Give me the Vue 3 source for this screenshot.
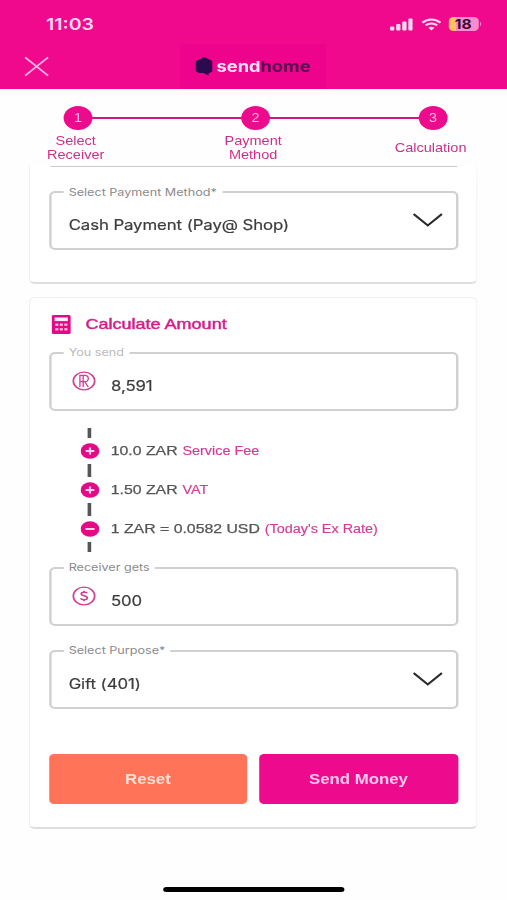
<script setup>
const steps = [
  { n: 1, lines: ['Select', 'Receiver'] },
  { n: 2, lines: ['Payment', 'Method'] },
  { n: 3, lines: ['Calculation'] },
]
const rates = [
  { plus: true, value: '10.0 ZAR', note: 'Service Fee' },
  { plus: true, value: '1.50 ZAR', note: 'VAT' },
  { plus: false, value: '1 ZAR = 0.0582 USD', note: "(Today's Ex Rate)" },
]
</script>

<template>
  <div class="screen">
    <header class="header">
      <div class="status">
        <span class="time">11:03</span>
        <span class="indicators">
          <svg class="signal" viewBox="0 0 19 13">
            <rect x="0" y="8.6" width="3.6" height="4" rx="1" />
            <rect x="5.1" y="6" width="3.6" height="6.6" rx="1" />
            <rect x="10.2" y="3.4" width="3.6" height="9.2" rx="1" />
            <rect x="15.3" y="0.6" width="3.6" height="12" rx="1" />
          </svg>
          <svg class="wifi" viewBox="0 0 17 13">
            <path d="M1 4.7C5.2.4 11.8.4 16 4.7" />
            <path d="M3.7 7.4c2.7-2.6 6.9-2.6 9.6 0" />
            <path class="dot" d="M8.5 12.4 5.9 9.7c1.4-1.3 3.8-1.3 5.2 0z" />
          </svg>
          <span class="battery"><span class="level">18</span></span>
          <span class="tip"></span>
        </span>
      </div>
      <div class="nav">
        <svg class="close" viewBox="0 0 22 22"><path d="M1 1.4 21 20.6M21 1.4 1 20.6" /></svg>
        <div class="brand">
          <svg class="mark" viewBox="0 0 14 18">
            <path d="M7 0 14 4v9.8L10.5 16v2L6.5 15.6H3L0 13.8V4z" />
          </svg>
          <span class="word">send<b>home</b></span>
        </div>
      </div>
    </header>

    <nav class="stepper">
      <div v-for="s in steps" :key="s.n" class="step">
        <span class="bubble">{{ s.n }}</span>
        <span class="caption"><span v-for="l in s.lines" :key="l">{{ l }}</span></span>
      </div>
    </nav>

    <section class="card first">
      <div class="edge"></div>
      <div class="field">
        <label>Select Payment Method*</label>
        <span class="value">Cash Payment (Pay@ Shop)</span>
        <svg class="chevron" viewBox="0 0 25 14"><path d="M.7 1 12.5 12.4 24.3 1" /></svg>
      </div>
    </section>

    <section class="card second">
      <h2 class="title">
        <svg class="calc" viewBox="0 0 16 19">
          <rect width="16" height="19" rx="1.5" fill="#e30a88" />
          <rect x="2.5" y="2.5" width="11" height="3.6" fill="#ffeef8" />
          <g fill="#ffc4e6">
            <rect x="3" y="8.6" width="2.6" height="2.2" />
            <rect x="6.8" y="8.6" width="2.6" height="2.2" />
            <rect x="10.6" y="8.6" width="2.6" height="2.2" />
            <rect x="3" y="13.2" width="2.6" height="2.2" />
            <rect x="6.8" y="13.2" width="2.6" height="2.2" />
            <rect x="10.6" y="13.2" width="2.6" height="2.2" />
          </g>
        </svg>
        <span>Calculate Amount</span>
      </h2>

      <div class="field">
        <label class="pale">You send</label>
        <svg class="coin" viewBox="0 0 20 20">
          <circle cx="10" cy="10" r="8.9" />
          <path class="rand" d="M6.6 16V4.400h4.200c3.700 0 3.700 6.200 0 6.200H6.600M10.600 10.600l2.900 5.400M9.300 4.400V16" />
        </svg>
        <span class="value">8,591</span>
      </div>

      <div class="rates">
        <div v-for="r in rates" :key="r.note" class="rate">
          <span class="rail">
            <i class="dash"></i>
            <svg class="sign" viewBox="0 0 16 16">
              <circle cx="8" cy="8" r="7.8" />
              <path :d="r.plus ? 'M4.4 8h7.2M8 4.6v6.8' : 'M4.2 8h7.6'" />
            </svg>
          </span>
          <span class="sum">{{ r.value }}</span>
          <span class="note">{{ r.note }}</span>
        </div>
        <i class="dash last"></i>
      </div>

      <div class="field">
        <label>Receiver gets</label>
        <svg class="coin" viewBox="0 0 20 20">
          <circle cx="10" cy="10" r="8.9" />
          <path d="M12.7 7.3c-.6-1.3-4.9-1.6-5 .6 0 2.2 5.1 1.5 5.1 4 0 2.4-5 2.1-5.5.3M10 4.7v1.6M10 13.7v1.6" />
        </svg>
        <span class="value">500</span>
      </div>

      <div class="field purpose">
        <label>Select Purpose*</label>
        <span class="value">Gift (401)</span>
        <svg class="chevron" viewBox="0 0 25 14"><path d="M.7 1 12.5 12.4 24.3 1" /></svg>
      </div>

      <div class="actions">
        <button class="reset">Reset</button>
        <button class="send">Send Money</button>
      </div>
    </section>

    <div class="home-bar"></div>
  </div>
</template>

<style>
body {
  background: #fefefe;
  overflow: hidden;
}
</style>

<style scoped>
/* The screen is laid out 422.5px wide and widened to fill the window. */
.screen {
  box-sizing: border-box;
  width: 422.5px;
  height: 900px;
  transform: scaleX(1.2);
  transform-origin: 0 0;
  background: #fefefe;
  font-family: 'Liberation Sans', Arial, sans-serif;
  display: flex;
  flex-direction: column;
}
.screen * {
  box-sizing: border-box;
}
svg {
  display: block;
  flex: none;
  fill: none;
}
.header {
  height: 89px;
  flex: none;
  background: #f0098c;
}
.status {
  height: 44px;
  padding: 4px 21.5px 0 38.3px;
  display: flex;
  align-items: center;
  justify-content: space-between;
}
.time {
  font: 600 16.3px/20px Inter, sans-serif;
  color: #ffd9f3;
}
.indicators {
  display: flex;
  align-items: center;
}
.signal {
  width: 19px;
  height: 13px;
  margin-right: 6.5px;
  fill: #ffd9f3;
}
.wifi {
  width: 17px;
  height: 13px;
  margin-right: 6px;
  stroke: #ffd9f3;
  stroke-width: 2;
}
.wifi .dot {
  fill: #ffd9f3;
  stroke: none;
}
.battery {
  width: 25px;
  height: 13.5px;
  border-radius: 4px;
  background: linear-gradient(90deg, #ffc35a 0 6px, #f98bd0 6px);
  display: flex;
  align-items: center;
  justify-content: center;
}
.level {
  font: 700 13px/13px Inter, sans-serif;
  color: #3d0a2c;
}
.tip {
  width: 1.5px;
  height: 4px;
  margin-left: 1px;
  border-radius: 0 2px 2px 0;
  background: #f770c4;
}
.nav {
  height: 45px;
  padding-left: 20px;
  display: flex;
  align-items: center;
}
.close {
  width: 21px;
  height: 21px;
  stroke: #ffb3e2;
  stroke-width: 1.6;
}
.brand {
  width: 121.5px;
  height: 45px;
  margin-left: 109px;
  padding-left: 13.2px;
  background: #ed038c;
  display: flex;
  align-items: center;
}
.mark {
  width: 14.3px;
  height: 18.5px;
  margin-right: 3px;
  fill: #2b0a50;
}
.word {
  font: 700 15.2px/20px Inter, sans-serif;
  color: #ffe3f6;
}
.word b {
  font-weight: 700;
  color: #5d0752;
}
.stepper {
  height: 76.5px;
  flex: none;
  padding: 16.5px 0 0;
  margin: 0 -12.2px 0 -8.9px;
  display: grid;
  grid-template-columns: repeat(3, 147.9px);
  background: linear-gradient(#d3177f, #d3177f) 74px 28px / 296px 2px no-repeat;
}
.step {
  display: flex;
  flex-direction: column;
  align-items: center;
}
.bubble {
  width: 24px;
  height: 24px;
  border-radius: 50%;
  background: #ee0a8c;
  color: #ffb8e4;
  font-size: 12px;
  line-height: 25px;
  text-align: center;
}
.caption {
  height: 29px;
  margin: 4.5px 4px 0 0;
  display: flex;
  flex-direction: column;
  justify-content: center;
  align-items: center;
  font-size: 12.1px;
  line-height: 13.5px;
  color: #cf2f8b;
}
.card {
  width: 374px;
  flex: none;
  margin-left: 24px;
  padding: 0 15.5px;
  border: 1px solid #f0f0f0;
  border-bottom: 2px solid #dedede;
  border-radius: 5px;
  background: #fff;
}
.first {
  height: 118px;
  border-top: 0;
  border-radius: 0 0 5px 5px;
}
.edge {
  height: 1.5px;
  margin: 0 1px 24px;
  background: #c9c9c9;
}
.second {
  height: 532px;
  margin-top: 13px;
}
.field {
  position: relative;
  height: 59px;
  border: 2px solid #d0d0d0;
  border-radius: 5px;
  display: flex;
  align-items: center;
  padding: 9px 10.5px 0 14.7px;
}
.field label {
  position: absolute;
  left: 10px;
  top: -8.5px;
  padding: 0 4.7px;
  background: #fff;
  font: 400 10.5px/15px Inter, sans-serif;
  color: #8a8a8a;
  white-space: nowrap;
}
.field label.pale {
  color: #b9b9b9;
}
.value {
  font: 400 14px/20px Inter, sans-serif;
  letter-spacing: -0.08px;
  color: #3c3c3c;
  -webkit-text-stroke: 0.2px #3c3c3c;
}
.chevron {
  width: 25px;
  height: 14px;
  margin: -10px 0 0 auto;
  stroke: #2a2a2a;
  stroke-width: 1.8;
}
.coin {
  width: 20px;
  height: 20px;
  margin: -9px 12.3px 0 3px;
  stroke: #cf3f92;
  stroke-width: 1.4;
}
.coin .rand {
  stroke-width: 1.1;
}
.title {
  height: 54px;
  margin: 0;
  padding: 0 0 1px 2.5px;
  display: flex;
  align-items: center;
  gap: 12.3px;
  font-weight: 400;
  font-size: 15px;
  line-height: 18px;
  color: #d81b86;
  -webkit-text-stroke: 0.45px #d81b86;
}
.calc {
  width: 16px;
  height: 19px;
  stroke: none;
}
.rates {
  height: 156px;
  padding: 16.5px 0 0 26.3px;
}
.rate {
  height: 39px;
  display: flex;
  align-items: flex-end;
}
.rate:first-child {
  height: 31.5px;
}
.rail {
  width: 16px;
  margin-right: 9.5px;
  display: flex;
  flex-direction: column;
  align-items: center;
  gap: 5px;
}
.dash {
  display: block;
  width: 3px;
  height: 13px;
  background: #555;
}
.rate:first-child .dash {
  height: 10px;
}
.dash.last {
  height: 10px;
  margin: 5px 0 0 6.5px;
}
.sign {
  width: 16px;
  height: 16px;
  fill: #e30a88;
}
.sign path {
  stroke: #ffd3ee;
  stroke-width: 1.8;
}
.sum {
  font-size: 13.2px;
  line-height: 16px;
  color: #555;
  -webkit-text-stroke: 0.25px #555;
}
.note {
  margin-left: 4px;
  font-size: 12px;
  line-height: 16px;
  color: #d63a96;
  -webkit-text-stroke: 0.15px #d63a96;
}
.purpose {
  margin-top: 24px;
}
.actions {
  margin-top: 45px;
  display: flex;
  gap: 10px;
}
.actions button {
  flex: 1;
  height: 50px;
  padding: 0;
  border: 0;
  border-radius: 4px;
  font: bold 14px/20px 'Liberation Sans', Arial, sans-serif;
}
.reset {
  background: #ff7359;
  color: #ffe0d4;
}
.send {
  background: #ee0a8c;
  color: #ffc9ec;
}
.home-bar {
  width: 151px;
  height: 5px;
  flex: none;
  margin: 58.5px 0 0 135.5px;
  border-radius: 3px;
  background: #000;
}
</style>
